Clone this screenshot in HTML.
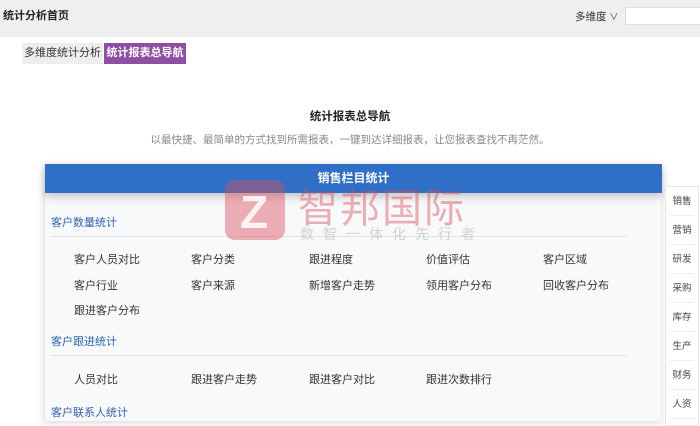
<!DOCTYPE html>
<html><head><meta charset="utf-8"><style>
*{margin:0;padding:0;box-sizing:border-box}
body{width:700px;height:421px;overflow:hidden;background:#fff;font-family:"Liberation Sans","Noto Sans CJK SC",sans-serif;font-size:11px;color:#333;position:relative}
.top{position:absolute;left:0;top:0;width:700px;height:37px;background:#efefef}
.abs{position:absolute;white-space:nowrap}
.panel{position:absolute;left:44px;top:164px;width:617px;height:257px;background:#f8f9fb;border-left:1px solid #e3e6ea;box-shadow:0 2px 8px rgba(0,0,0,.15)}
.hdr{position:absolute;left:0;top:0;width:617px;height:29px;background:#2f6fc6;color:#fff;font-weight:bold;font-size:12px;text-align:center;line-height:29px;box-shadow:0 4px 8px rgba(0,0,0,.2)}
.sec{position:absolute;left:6px;color:#2f64b0;font-size:11px}
.line{position:absolute;left:6px;width:576px;height:1px;background:#dfe2e6}
.it{position:absolute;font-size:11px;color:#333}
.side{position:absolute;left:665px;top:186px;width:34px;height:240px;background:#fff;border:1px solid #e6e6e6}
.side div{height:29px;line-height:29px;text-align:center;font-size:9.5px;color:#444;border-bottom:1px solid #eee;margin:0 4px}
</style></head><body>
<div class="top"></div>
<div class="abs" style="left:3px;top:7px;font-weight:bold;font-size:11px;color:#222">统计分析首页</div>
<div class="abs" style="left:575px;top:9px;font-size:10.5px">多维度 <span style="font-size:9px">∨</span></div>
<div class="abs" style="left:625px;top:7px;width:78px;height:18px;background:#fff;border:1px solid #ddd"></div>
<div class="abs" style="left:22px;top:43px;width:81px;height:21px;background:#eee;line-height:21px;text-align:center;font-size:11px">多维度统计分析</div>
<div class="abs" style="left:104px;top:43px;width:82px;height:21px;background:#8e4fa3;color:#fff;font-weight:bold;line-height:21px;text-align:center;font-size:11px">统计报表总导航</div>
<div class="abs" style="left:0;width:700px;top:108px;text-align:center;font-weight:bold;font-size:11.5px;color:#222">统计报表总导航</div>
<div class="abs" style="left:0;width:700px;top:132px;text-align:center;font-size:10.5px;color:#888">以最快捷、最简单的方式找到所需报表，一键到达详细报表，让您报表查找不再茫然。</div>
<div class="panel">
<div class="sec" style="top:50px">客户数量统计</div>
<div class="line" style="top:72px"></div>
<div class="it" style="left:29px;top:87px">客户人员对比</div><div class="it" style="left:146px;top:87px">客户分类</div><div class="it" style="left:264px;top:87px">跟进程度</div><div class="it" style="left:381px;top:87px">价值评估</div><div class="it" style="left:498px;top:87px">客户区域</div>
<div class="it" style="left:29px;top:113px">客户行业</div><div class="it" style="left:146px;top:113px">客户来源</div><div class="it" style="left:264px;top:113px">新增客户走势</div><div class="it" style="left:381px;top:113px">领用客户分布</div><div class="it" style="left:498px;top:113px">回收客户分布</div>
<div class="it" style="left:29px;top:138px">跟进客户分布</div>
<div class="sec" style="top:169px">客户跟进统计</div>
<div class="line" style="top:191px"></div>
<div class="it" style="left:29px;top:207px">人员对比</div><div class="it" style="left:146px;top:207px">跟进客户走势</div><div class="it" style="left:264px;top:207px">跟进客户对比</div><div class="it" style="left:381px;top:207px">跟进次数排行</div>
<div class="sec" style="top:240px">客户联系人统计</div>
<div class="hdr">销售栏目统计</div>
</div>
<div class="abs" style="left:225px;top:180px;width:60px;height:60px;border-radius:10px;background:rgba(220,80,90,.45)"></div>
<div class="abs" style="left:240px;top:185px;font-size:46px;font-weight:bold;color:rgba(255,255,255,.85)">Z</div>
<div class="abs" style="left:298px;top:176px;font-size:40px;color:rgba(220,80,90,.45);letter-spacing:2px">智邦国际</div>
<div class="abs" style="left:300px;top:224px;font-size:14px;color:rgba(150,150,150,.4);letter-spacing:9px">数智一体化先行者</div>
<div class="side"><div>销售</div><div>营销</div><div>研发</div><div>采购</div><div>库存</div><div>生产</div><div>财务</div><div>人资</div></div>
</body></html>
